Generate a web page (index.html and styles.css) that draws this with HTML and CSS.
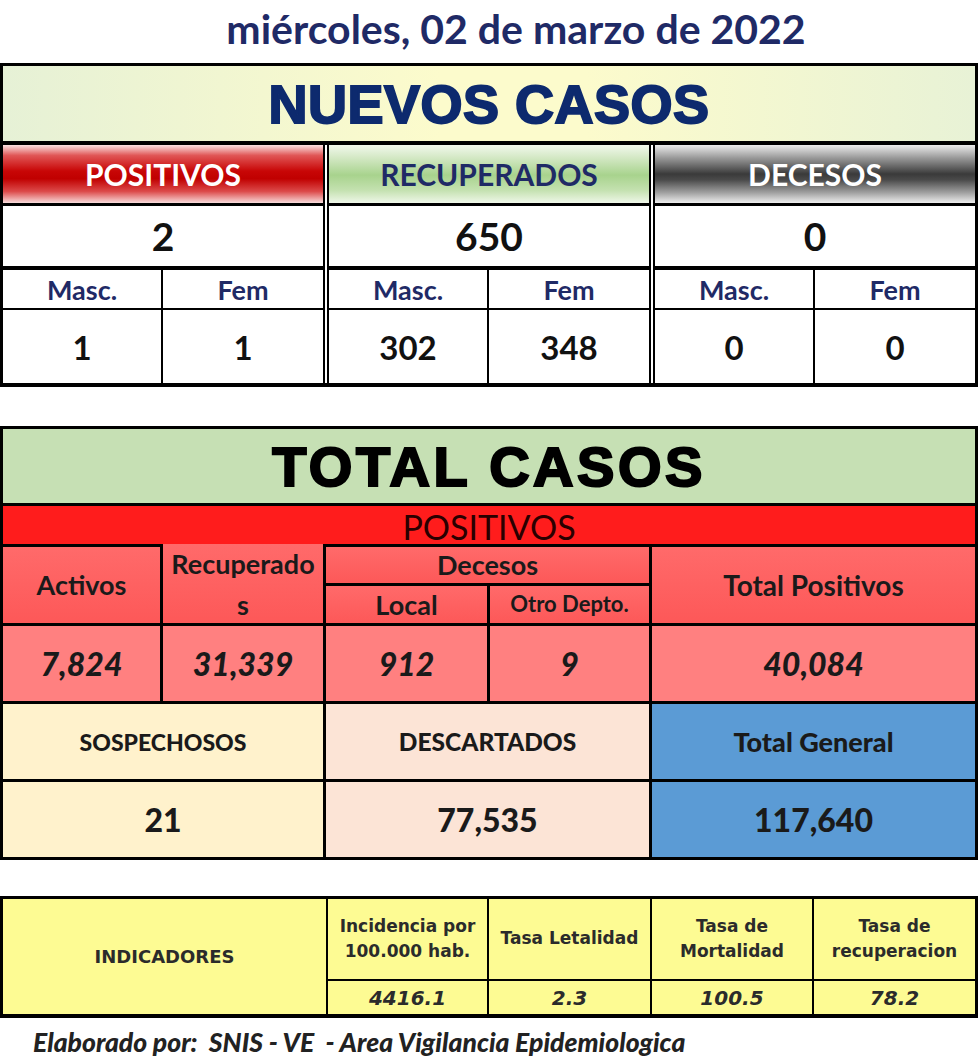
FILE: index.html
```html
<!DOCTYPE html>
<html lang="es">
<head>
<meta charset="utf-8">
<title>Reporte COVID</title>
<link rel="stylesheet" href="styles.css">
</head>
<body>
<div class="page">
  <h1 class="date">miércoles, 02 de marzo de 2022</h1>

  <section class="nuevos">
    <div class="nuevos-title">NUEVOS CASOS</div>
    <div class="groups">
      <div class="grp">
        <div class="grp-head head-red">POSITIVOS</div>
        <div class="grp-total">2</div>
        <div class="sub">
          <div class="sub-label">Masc.</div><div class="sub-label">Fem</div>
          <div class="sub-val">1</div><div class="sub-val">1</div>
        </div>
      </div>
      <div class="grp">
        <div class="grp-head head-green">RECUPERADOS</div>
        <div class="grp-total">650</div>
        <div class="sub">
          <div class="sub-label">Masc.</div><div class="sub-label">Fem</div>
          <div class="sub-val">302</div><div class="sub-val">348</div>
        </div>
      </div>
      <div class="grp">
        <div class="grp-head head-gray">DECESOS</div>
        <div class="grp-total">0</div>
        <div class="sub">
          <div class="sub-label">Masc.</div><div class="sub-label">Fem</div>
          <div class="sub-val">0</div><div class="sub-val">0</div>
        </div>
      </div>
    </div>
  </section>

  <section class="total">
    <div class="total-title">TOTAL CASOS</div>
    <div class="pos-band">POSITIVOS</div>
    <div class="cell ph ph-activos">Activos</div>
    <div class="cell ph ph-recup">Recuperado<br>s</div>
    <div class="cell ph ph-decesos">Decesos</div>
    <div class="cell ph ph-local">Local</div>
    <div class="cell ph ph-otro">Otro Depto.</div>
    <div class="cell ph ph-totalpos">Total Positivos</div>
    <div class="cell pv">7,824</div>
    <div class="cell pv">31,339</div>
    <div class="cell pv">912</div>
    <div class="cell pv">9</div>
    <div class="cell pv">40,084</div>
    <div class="cell sh sosp span2">SOSPECHOSOS</div>
    <div class="cell sh desc desc-h span2">DESCARTADOS</div>
    <div class="cell sh gen gen-h">Total General</div>
    <div class="cell sv sosp span2">21</div>
    <div class="cell sv desc span2">77,535</div>
    <div class="cell sv gen">117,640</div>
  </section>

  <section class="ind">
    <div class="ind-cell ind-main">INDICADORES</div>
    <div class="ind-cell ind-head">Incidencia por<br>100.000 hab.</div>
    <div class="ind-cell ind-head">Tasa Letalidad</div>
    <div class="ind-cell ind-head">Tasa de<br>Mortalidad</div>
    <div class="ind-cell ind-head">Tasa de<br>recuperacion</div>
    <div class="ind-cell ind-val">4416.1</div>
    <div class="ind-cell ind-val">2.3</div>
    <div class="ind-cell ind-val">100.5</div>
    <div class="ind-cell ind-val">78.2</div>
  </section>

  <p class="footer">Elaborado por:&nbsp; SNIS - VE &nbsp;- Area Vigilancia Epidemiologica</p>
</div>
</body>
</html>
```

FILE: styles.css
```css
* { box-sizing: border-box; }

body {
  margin: 0;
  background: #fff;
  font-family: "Lato", "Open Sans", sans-serif;
  color: #111;
}

.page {
  width: 980px;
  padding: 0 2px 0 0;
}

.date {
  margin: 0;
  height: 63px;
  display: flex;
  align-items: center;
  justify-content: center;
  padding: 0 0 6px 54px;
  font-size: 41px;
  font-weight: 700;
  color: #1f2a66;
}

/* ---------- NUEVOS CASOS ---------- */
.nuevos {
  border: 3px solid #000;
  border-bottom-width: 4px;
  width: 978px;
}

.nuevos-title {
  height: 79px;
  border-bottom: 4px solid #000;
  background: linear-gradient(to right, #e6f1d6 0%, #fcfbcc 45%, #fcfbcc 60%, #e8f2d6 100%);
  display: flex;
  align-items: center;
  justify-content: center;
  font-family: "Liberation Sans", Arial, sans-serif;
  font-weight: 700;
  font-size: 54px;
  color: #0d2a6e;
  -webkit-text-stroke: 2px #0d2a6e;
  letter-spacing: 0.5px;
}

.groups {
  display: grid;
  grid-template-columns: 326px 326px 1fr;
}

.grp {
  border-right: 6px double #000;
  display: flex;
  flex-direction: column;
}
.grp:last-child { border-right: none; }

.grp-head {
  height: 61px;
  border-bottom: 3px solid #000;
  display: flex;
  align-items: center;
  justify-content: center;
  font-size: 30px;
  font-weight: 700;
}
.head-red {
  color: #fff;
  background: linear-gradient(to bottom, #fbe2e2 0%, #e05656 18%, #c80606 45%, #c00000 58%, #dc4a4a 80%, #f8dcdc 100%);
}
.head-green {
  color: #1f2a66;
  background: linear-gradient(to bottom, #f2f8ec 0%, #cfe6bf 25%, #a8d38d 52%, #c4e1b0 78%, #eff7e9 100%);
}
.head-gray {
  color: #fff;
  background: linear-gradient(to bottom, #ececec 0%, #9a9a9a 22%, #3a3a3a 50%, #4a4a4a 60%, #a0a0a0 82%, #eeeeee 100%);
}

.grp-total {
  height: 64px;
  border-bottom: 4px solid #000;
  display: flex;
  align-items: center;
  justify-content: center;
  font-size: 39px;
  font-weight: 700;
  color: #111;
}

.sub {
  display: grid;
  grid-template-columns: 1fr 1fr;
}
.sub-label, .sub-val {
  display: flex;
  align-items: center;
  justify-content: center;
  font-weight: 700;
}
.sub-label {
  height: 40px;
  border-bottom: 2px solid #000;
  font-size: 27px;
  color: #1f2a66;
}
.sub-val {
  height: 73px;
  font-size: 33px;
  color: #111;
}
.sub-label:nth-child(odd), .sub-val:nth-child(odd) {
  border-right: 2px solid #000;
}

/* ---------- TOTAL CASOS ---------- */
.total {
  margin-top: 39px;
  width: 978px;
  background: #000;
  padding: 3px;
  display: grid;
  gap: 3px;
  grid-template-columns: 157px 160px 161px 159px 1fr;
  grid-template-rows: 74px 38px 36px 37px 75px 75px 75px;
}

.total-title {
  grid-column: 1 / -1;
  background: #c6e0b4;
  display: flex;
  align-items: center;
  justify-content: center;
  font-family: "Liberation Sans", Arial, sans-serif;
  font-weight: 700;
  font-size: 56px;
  color: #000;
  -webkit-text-stroke: 2.2px #000;
  letter-spacing: 3.5px;
}

.pos-band {
  grid-column: 1 / -1;
  background: #ff1c1c;
  display: flex;
  align-items: center;
  justify-content: center;
  font-size: 34px;
  font-weight: 400;
  color: #2a0000;
  padding-top: 2px;
}

.cell {
  display: flex;
  align-items: center;
  justify-content: center;
  text-align: center;
  font-weight: 700;
  color: #1a1a1a;
}

.ph {
  background: linear-gradient(to bottom, #ff6a6a, #fd5858);
  font-size: 27px;
  line-height: 1.3;
}
.ph-activos { grid-row: 3 / 5; grid-column: 1; }
.ph-recup { grid-row: 3 / 5; grid-column: 2; align-items: flex-start; line-height: 1.5; padding-top: 0; margin-top: -3px; }
.ph-decesos { grid-row: 3; grid-column: 3 / 5; }
.ph-local { grid-row: 4; grid-column: 3; }
.ph-otro { grid-row: 4; grid-column: 4; font-size: 22px; }
.ph-totalpos { grid-row: 3 / 5; grid-column: 5; font-size: 28px; }

.pv {
  background: #ff8080;
  font-size: 32px;
  font-style: italic;
  font-weight: 900;
}

.span2 { grid-column: span 2; }
.sh { font-size: 23px; font-weight: 900; }
.desc-h { font-size: 24.5px; }
.gen-h { font-size: 27px; }
.sv { font-size: 32px; font-weight: 900; }
.sosp { background: #fff2cc; }
.desc { background: #fce4d6; }
.gen { background: #5b9bd5; }

/* ---------- INDICADORES ---------- */
.ind {
  margin-top: 36px;
  width: 978px;
  background: #000;
  padding: 3px 3px 4px 3px;
  display: grid;
  gap: 2px;
  grid-template-columns: 323px 159px 161px 160px 1fr;
  grid-template-rows: 80px 33px;
}

.ind-cell {
  background: #fdfb93;
  display: flex;
  align-items: center;
  justify-content: center;
  text-align: center;
  font-family: "DejaVu Sans", Verdana, sans-serif;
  font-weight: 700;
  color: #2b2b2b;
}
.ind-main { grid-row: 1 / 3; font-size: 18px; }
.ind-head { font-size: 17px; line-height: 1.5; }
.ind-val { font-size: 20px; font-style: italic; }

.footer {
  margin: 8px 0 0 33px;
  font-size: 26.5px;
  font-weight: 900;
  font-style: italic;
  color: #222;
}
```
